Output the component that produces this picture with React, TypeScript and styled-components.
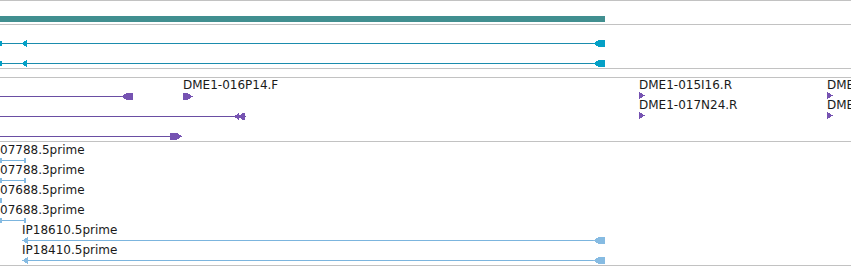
import React from "react";
import styled, { createGlobalStyle } from "styled-components";

const GlobalStyle = createGlobalStyle`
  html, body {
    margin: 0;
    padding: 0;
    background: #fff;
  }
  body {
    font-family: "DejaVu Sans", "Liberation Sans", sans-serif;
    font-size: 12px;
    color: #1a1a1a;
    overflow: hidden;
  }
`;

const Panel = styled.div`
  width: 851px;
  display: flex;
  flex-direction: column;
  border-top: 1px solid #c2c2c2;
`;

const Track = styled.div<{ $h: number }>`
  position: relative;
  height: ${(p) => p.$h}px;
  border-bottom: 1px solid #c2c2c2;
  overflow: hidden;
`;

const Canvas = styled.svg`
  display: block;
  width: 851px;
  height: 100%;
  shape-rendering: crispEdges;
`;

const Label = styled.span<{ $x: number; $y: number }>`
  position: absolute;
  left: ${(p) => p.$x}px;
  top: ${(p) => p.$y}px;
  line-height: 14px;
  white-space: nowrap;
`;

type Palette = { line: string; head: string };

const teal = "#418f90";
const cyan: Palette = { line: "#1b8cad", head: "#04a0c6" };
const purple: Palette = { line: "#6a4ea3", head: "#7653b2" };
const sky: Palette = { line: "#7cb5de", head: "#86bbe2" };

// a transcript drawn as a thin line with glyphs on its ends
type Glyph = "box" | "left" | "right" | "dleft" | "tick" | "none";

const End = ({ kind, x, y, c }: { kind: Glyph; x: number; y: number; c: string }) => {
  if (kind === "box") return <rect x={x} y={y - 3} width={6} height={7} fill={c} />;
  if (kind === "tick") return <rect x={x} y={y - 2} width={2} height={5} fill={c} />;
  if (kind === "left")
    return <polygon points={`${x},${y + 0.5} ${x + 6},${y - 3.5} ${x + 6},${y + 4}`} fill={c} />;
  if (kind === "right")
    return <polygon points={`${x + 6},${y + 0.5} ${x},${y - 3.5} ${x},${y + 4}`} fill={c} />;
  if (kind === "dleft")
    return (
      <g fill={c}>
        <polygon points={`${x},${y + 0.5} ${x + 5},${y - 3} ${x + 5},${y + 4}`} />
        <polygon points={`${x + 4},${y + 0.5} ${x + 9},${y - 3} ${x + 9},${y + 4}`} />
        <rect x={x + 9} y={y - 3} width={2} height={7} />
      </g>
    );
  return null;
};

const Feature = ({
  x1,
  x2,
  y,
  p,
  start,
  end,
}: {
  x1: number;
  x2: number;
  y: number;
  p: Palette;
  start: Glyph[];
  end: Glyph[];
}) => (
  <g>
    {x2 > x1 && <rect x={x1} y={y} width={x2 - x1} height={1} fill={p.line} />}
    {start.map((g, i) => (
      <End key={"s" + i} kind={g} x={x1 + i * 6} y={y} c={p.head} />
    ))}
    {end.map((g, i) => (
      <End key={"e" + i} kind={g} x={x2 - (end.length - i) * 6} y={y} c={p.head} />
    ))}
  </g>
);

const Marker = ({ x, y, c }: { x: number; y: number; c: string }) => (
  <polygon points={`${x},${y - 3} ${x + 6},${y + 0.5} ${x},${y + 4}`} fill={c} />
);

export default function App() {
  const shortRows = [
    { name: "07788.5prime", line: true },
    { name: "07788.3prime", line: true },
    { name: "07688.5prime", line: false },
    { name: "07688.3prime", line: true },
  ];
  return (
    <>
      <GlobalStyle />
      <Panel>
        <Track $h={23}>
          <Canvas>
            <rect x={0} y={15} width={605} height={6} fill={teal} />
          </Canvas>
        </Track>

        <Track $h={43}>
          <Canvas>
            <Feature x1={0} x2={605} y={18} p={cyan} start={["tick"]} end={["left", "box"]} />
            <End kind="left" x={21} y={18} c={cyan.head} />
            <Feature x1={0} x2={605} y={38} p={cyan} start={["tick"]} end={["left", "box"]} />
            <End kind="left" x={21} y={38} c={cyan.head} />
          </Canvas>
        </Track>

        <Track $h={8} />

        <Track $h={63}>
          <Canvas>
            <Feature x1={0} x2={133} y={18} p={purple} start={[]} end={["left", "box"]} />
            <Feature x1={0} x2={246} y={38} p={purple} start={[]} end={[]} />
            <End kind="dleft" x={234} y={38} c={purple.head} />
            <Feature x1={0} x2={182} y={58} p={purple} start={[]} end={["box", "right"]} />
            <rect x={183} y={15} width={5} height={7} fill={purple.head} />
            <Marker x={187} y={18} c={purple.head} />
            <Marker x={639} y={17} c={purple.head} />
            <Marker x={639} y={37} c={purple.head} />
            <Marker x={827} y={17} c={purple.head} />
            <Marker x={827} y={37} c={purple.head} />
          </Canvas>
          <Label $x={183} $y={0}>DME1-016P14.F</Label>
          <Label $x={639} $y={0}>DME1-015I16.R</Label>
          <Label $x={639} $y={20}>DME1-017N24.R</Label>
          <Label $x={827} $y={0}>DME1-015I16.R</Label>
          <Label $x={827} $y={20}>DME1-017N24.R</Label>
        </Track>

        <Track $h={123}>
          <Canvas>
            {shortRows.map((r, i) =>
              r.line ? (
                <g key={r.name}>
                  <rect x={0} y={18 + i * 20} width={25} height={1} fill={sky.line} />
                  <End kind="tick" x={0} y={18 + i * 20} c={sky.head} />
                  <End kind="tick" x={24} y={18 + i * 20} c={sky.head} />
                </g>
              ) : (
                <End key={r.name} kind="tick" x={0} y={18 + i * 20} c={sky.head} />
              )
            )}
            <Feature x1={22} x2={605} y={98} p={sky} start={["left"]} end={["left", "box"]} />
            <Feature x1={22} x2={605} y={118} p={sky} start={["left"]} end={["left", "box"]} />
          </Canvas>
          {shortRows.map((r, i) => (
            <Label key={r.name} $x={0} $y={1 + i * 20}>
              {r.name}
            </Label>
          ))}
          <Label $x={22} $y={81}>IP18610.5prime</Label>
          <Label $x={22} $y={101}>IP18410.5prime</Label>
        </Track>
      </Panel>
    </>
  );
}
